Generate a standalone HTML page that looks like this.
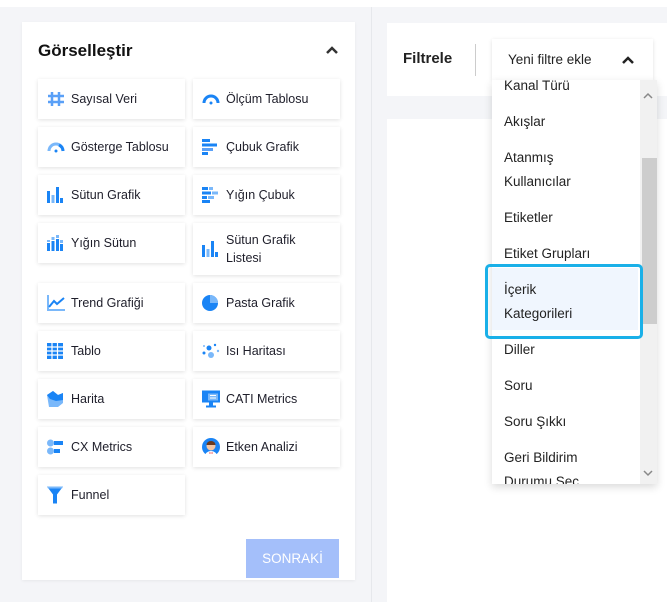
<!DOCTYPE html>
<html><head><meta charset="utf-8"><style>
*{box-sizing:border-box;margin:0;padding:0}
body{width:667px;height:602px;overflow:hidden;background:#f4f5f8;font-family:"Liberation Sans","DejaVu Sans",sans-serif;color:#1e1e2a;position:relative}
.abs{position:absolute}
.card{background:#fff}
.tile{position:absolute;background:#fff;box-shadow:0 1px 4px rgba(0,0,0,.12);height:40px;width:147px;display:flex;align-items:center;font-size:12.5px;color:#1e1e2a}
.tile svg{position:absolute;left:9px;top:50%;transform:translateY(-50%)}
.tile span{position:absolute;left:33px;line-height:18px}
.it{position:absolute;left:504px;font-size:13.5px;color:#222;line-height:24px}
</style></head><body>
<div class="abs" style="left:0;top:0;width:667px;height:7px;background:#fff"></div>
<div class="abs" style="left:371px;top:7px;width:1px;height:595px;background:#e6e8ec"></div>
<div class="abs card" style="left:22px;top:22px;width:333px;height:558px;box-shadow:0 1px 3px rgba(0,0,0,.06)"></div>
<div class="abs" style="left:38px;top:41px;font-size:17px;font-weight:bold;color:#111">Görselleştir</div>
<svg class="abs" style="left:325px;top:45px" width="14" height="10"><path d="M2 8L7 3L12 8" stroke="#333" stroke-width="2.5" fill="none"/></svg>

<div class="tile" style="left:38px;top:79px"><svg width="18" height="16"><path d="M5 1v14M12 1v14M1 5h16M1 11h16" stroke="#5aa0f7" stroke-width="2.5"/></svg><span>Sayısal Veri</span></div>
<div class="tile" style="left:193px;top:79px"><svg width="18" height="12"><path d="M2 10A7 7 0 0 1 16 10" stroke="#1a84f5" stroke-width="3" fill="none"/><circle cx="9" cy="10" r="1.5" fill="#1a84f5"/></svg><span>Ölçüm Tablosu</span></div>
<div class="tile" style="left:38px;top:127px"><svg width="18" height="12"><path d="M2 10A7 7 0 0 1 16 10" stroke="#7ab8fa" stroke-width="3" fill="none"/><path d="M12 4A7 7 0 0 1 16 10" stroke="#1a84f5" stroke-width="3" fill="none"/><circle cx="9" cy="10" r="1.5" fill="#1a84f5"/></svg><span>Gösterge Tablosu</span></div>
<div class="tile" style="left:193px;top:127px"><svg width="16" height="16"><rect x="0" y="0" width="8" height="3" fill="#1a84f5"/><rect x="0" y="4.5" width="15" height="3" fill="#1a84f5"/><rect x="0" y="9" width="11" height="3" fill="#5aa0f7"/><rect x="0" y="13" width="6" height="3" fill="#1a84f5"/></svg><span>Çubuk Grafik</span></div>
<div class="tile" style="left:38px;top:175px"><svg width="16" height="16"><rect x="0" y="4" width="3" height="12" fill="#1a84f5"/><rect x="4.5" y="8" width="3" height="8" fill="#7ab8fa"/><rect x="9" y="0" width="3" height="16" fill="#1a84f5"/><rect x="13" y="11" width="3" height="5" fill="#1a84f5"/></svg><span>Sütun Grafik</span></div>
<div class="tile" style="left:193px;top:175px"><svg width="16" height="16"><rect x="0" y="0" width="6" height="3" fill="#1a84f5"/><rect x="7" y="0" width="4" height="3" fill="#7ab8fa"/><rect x="0" y="4.5" width="9" height="3" fill="#1a84f5"/><rect x="10" y="4.5" width="6" height="3" fill="#7ab8fa"/><rect x="0" y="9" width="5" height="3" fill="#1a84f5"/><rect x="6" y="9" width="6" height="3" fill="#7ab8fa"/><rect x="0" y="13" width="8" height="3" fill="#1a84f5"/></svg><span>Yığın Çubuk</span></div>
<div class="tile" style="left:38px;top:223px"><svg width="16" height="16"><rect x="0" y="8" width="3" height="8" fill="#1a84f5"/><rect x="0" y="5" width="3" height="2" fill="#7ab8fa"/><rect x="4.5" y="6" width="3" height="10" fill="#1a84f5"/><rect x="4.5" y="2" width="3" height="3" fill="#7ab8fa"/><rect x="9" y="4" width="3" height="12" fill="#1a84f5"/><rect x="9" y="0" width="3" height="3" fill="#7ab8fa"/><rect x="13" y="9" width="3" height="7" fill="#1a84f5"/><rect x="13" y="5" width="3" height="3" fill="#7ab8fa"/></svg><span>Yığın Sütun</span></div>
<div class="tile" style="left:193px;top:223px;height:52px"><svg width="16" height="16"><rect x="0" y="4" width="3" height="12" fill="#1a84f5"/><rect x="4.5" y="8" width="3" height="8" fill="#7ab8fa"/><rect x="9" y="0" width="3" height="16" fill="#1a84f5"/><rect x="13" y="11" width="3" height="5" fill="#1a84f5"/></svg><span>Sütun Grafik<br>Listesi</span></div>
<div class="tile" style="left:38px;top:283px"><svg width="18" height="16"><path d="M1 0v15h17" stroke="#7ab8fa" stroke-width="2" fill="none"/><path d="M2 12L7 6L10 9L17 3" stroke="#1a84f5" stroke-width="2" fill="none"/></svg><span>Trend Grafiği</span></div>
<div class="tile" style="left:193px;top:283px"><svg width="16" height="16"><circle cx="8" cy="8" r="8" fill="#1a84f5"/><path d="M8 8V0A8 8 0 0 1 16 8Z" fill="#7ab8fa"/></svg><span>Pasta Grafik</span></div>
<div class="tile" style="left:38px;top:331px"><svg width="16" height="16"><path d="M0 0h16v16H0z" fill="#1a84f5"/><path d="M5 0v16M10.5 0v16M0 4h16M0 8h16M0 12h16" stroke="#fff" stroke-width="1.2"/></svg><span>Tablo</span></div>
<div class="tile" style="left:193px;top:331px"><svg width="18" height="16"><circle cx="7" cy="5" r="2.5" fill="#1a84f5"/><circle cx="9" cy="12" r="3" fill="#7ab8fa"/><circle cx="2" cy="10" r="1.5" fill="#1a84f5"/><circle cx="13" cy="2" r="1.2" fill="#1a84f5"/><circle cx="16" cy="8" r="1.2" fill="#7ab8fa"/><circle cx="2" cy="3" r="1" fill="#7ab8fa"/></svg><span>Isı Haritası</span></div>
<div class="tile" style="left:38px;top:379px"><svg width="17" height="16"><path d="M0 4L6 0L11 4L16 2V12L11 16H2Z" fill="#7ab8fa"/><path d="M0 4L6 0L11 4L16 2V9L9 10L3 8Z" fill="#1a84f5"/></svg><span>Harita</span></div>
<div class="tile" style="left:193px;top:379px"><svg width="18" height="17"><rect x="0" y="0" width="18" height="12" fill="#1a84f5"/><rect x="6" y="3" width="10" height="7" fill="#7ab8fa"/><path d="M8 5h6M8 7.5h6" stroke="#fff" stroke-width="1"/><rect x="7" y="12" width="4" height="3" fill="#1a84f5"/><rect x="4" y="15" width="10" height="2" fill="#1a84f5"/></svg><span>CATI Metrics</span></div>
<div class="tile" style="left:38px;top:427px"><svg width="16" height="16"><circle cx="3.5" cy="4" r="3.5" fill="#7ab8fa"/><circle cx="3.5" cy="12" r="3.5" fill="#7ab8fa"/><rect x="7" y="2" width="9" height="4" fill="#1a84f5"/><rect x="7" y="10" width="6" height="4" fill="#1a84f5"/></svg><span>CX Metrics</span></div>
<div class="tile" style="left:193px;top:427px"><svg width="18" height="18"><circle cx="9" cy="9" r="9" fill="#1a84f5"/><circle cx="9" cy="8" r="4.5" fill="#f3c6a5"/><path d="M4.5 7a4.5 4 0 0 1 9 0z" fill="#6b3a1f"/><path d="M3 18a6 5 0 0 1 12 0z" fill="#fff"/><path d="M7.5 14l1.5 1 1.5-1v2l-1.5-1-1.5 1z" fill="#e33"/></svg><span>Etken Analizi</span></div>
<div class="tile" style="left:38px;top:475px"><svg width="16" height="17"><path d="M0 0h16L10 8v9H6V8z" fill="#1a84f5"/><path d="M0 0h16l-1 2H1z" fill="#7ab8fa"/></svg><span>Funnel</span></div>

<div class="abs" style="left:246px;top:539px;width:93px;height:39px;background:#a4bffa;color:#fff;font-size:13.5px;display:flex;align-items:center;justify-content:center">SONRAKİ</div>

<div class="abs card" style="left:387px;top:23px;width:280px;height:73px"></div>
<div class="abs card" style="left:387px;top:119px;width:280px;height:483px"></div>
<div class="abs" style="left:403px;top:50px;font-size:15px;font-weight:bold;color:#222">Filtrele</div>
<div class="abs" style="left:475px;top:44px;width:1px;height:32px;background:#ccc"></div>
<div class="abs" style="left:492px;top:39px;width:161px;height:41px;background:#fff;box-shadow:0 1px 4px rgba(0,0,0,.12)"></div>
<div class="abs" style="left:508px;top:52px;font-size:13.5px;color:#222">Yeni filtre ekle</div>
<svg class="abs" style="left:621px;top:55px" width="14" height="10"><path d="M2 8L7 3L12 8" stroke="#222" stroke-width="2.5" fill="none"/></svg>

<div class="abs" style="left:492px;top:80px;width:165px;height:404px;background:#fff;box-shadow:0 3px 8px rgba(0,0,0,.15)"></div>
<div class="abs" style="left:640px;top:80px;width:17px;height:404px;background:#f1f1f1"></div>
<div class="abs" style="left:642px;top:158px;width:15px;height:166px;background:#cdcdcd"></div>
<svg class="abs" style="left:643px;top:92px" width="10" height="8"><path d="M1 6L5 2L9 6" stroke="#888" stroke-width="1.5" fill="none"/></svg>
<svg class="abs" style="left:643px;top:469px" width="10" height="8"><path d="M1 2L5 6L9 2" stroke="#888" stroke-width="1.5" fill="none"/></svg>
<div class="abs" style="left:492px;top:268px;width:146px;height:62px;background:#f0f6fe"></div>
<div class="abs" style="left:485px;top:264px;width:158px;height:75px;border:3px solid #1ab0e8;border-radius:5px"></div>
<div style="position:absolute;left:0;top:80px;width:640px;height:404px;overflow:hidden">
<div class="it" style="top:-6px">Kanal Türü</div>
<div class="it" style="top:30px">Akışlar</div>
<div class="it" style="top:66px">Atanmış<br>Kullanıcılar</div>
<div class="it" style="top:126px">Etiketler</div>
<div class="it" style="top:162px">Etiket Grupları</div>
<div class="it" style="top:198px">İçerik<br>Kategorileri</div>
<div class="it" style="top:258px">Diller</div>
<div class="it" style="top:294px">Soru</div>
<div class="it" style="top:330px">Soru Şıkkı</div>
<div class="it" style="top:366px">Geri Bildirim<br>Durumu Seç</div>
</div>
</body></html>
